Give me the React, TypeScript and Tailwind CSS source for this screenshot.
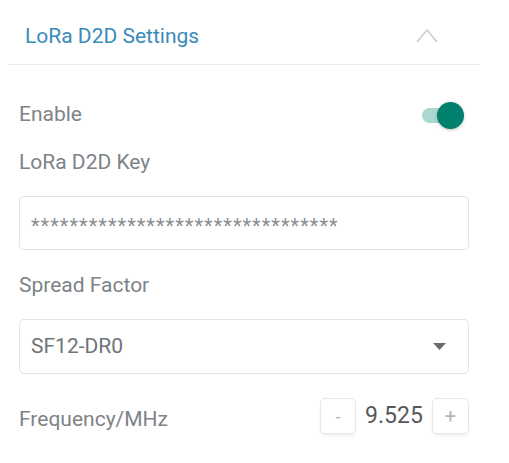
import React from "react";

export default function App() {
  const font = { fontFamily: "Roboto, 'Noto Sans', sans-serif" };
  return (
    <div className="w-[509px] h-[463px] bg-white overflow-hidden" style={font}>
      <div className="ml-[8px] w-[472px] h-[65px] border-b border-[#ececec] flex items-center justify-between pl-[17px] pr-[41px]">
        <span className="text-[21px] text-[#3a8abb] leading-none mt-[9px]">LoRa D2D Settings</span>
        <svg width="24" height="18" viewBox="0 0 24 18" className="mt-[6px]">
          <path d="M2 16 L12 4 L22 16" fill="none" stroke="#cfcfcf" strokeWidth="1.6" />
        </svg>
      </div>
      <div className="px-[19px] w-[488px]">
        <div className="h-[50px] mt-[25px] flex items-center justify-between">
          <span className="text-[21px] text-[#7d8387]">Enable</span>
          <div className="relative w-[44px] h-[28px] mr-[5px]">
            <div className="absolute left-[2px] top-[7px] w-[34px] h-[15px] rounded-full bg-[#a9d8d0]" />
            <div className="absolute right-[0px] top-[1px] w-[27px] h-[27px] rounded-full bg-[#00806d] shadow-[0_1px_3px_rgba(0,0,0,0.25)]" />
          </div>
        </div>
        <div className="mt-[3px] h-[40px] flex items-center">
          <span className="text-[21px] text-[#7d8387]">LoRa D2D Key</span>
        </div>
        <div className="mt-[13px] h-[54px] w-[450px] border border-[#e3e3e3] rounded-[5px] flex items-center pl-[11px]">
          <span className="text-[20px] text-[#8a8f93] tracking-[1px] mt-[5px]">********************************</span>
        </div>
        <div className="mt-[16px] h-[40px] flex items-center">
          <span className="text-[21px] text-[#7d8387]">Spread Factor</span>
        </div>
        <div className="mt-[13px] h-[55px] w-[450px] border border-[#e3e3e3] rounded-[5px] flex items-center justify-between pl-[11px] pr-[22px]">
          <span className="text-[21px] text-[#6f7478]">SF12-DR0</span>
          <svg width="13" height="7" viewBox="0 0 13 7">
            <path d="M0 0 L13 0 L6.5 7 Z" fill="#6b6b6b" />
          </svg>
        </div>
        <div className="mt-[24px] h-[36px] flex items-center justify-between">
          <span className="text-[21px] text-[#7d8387] mt-[8px]">Frequency/MHz</span>
          <div className="flex items-center">
            <div className="w-[36px] h-[36px] border border-[#e6e6e6] rounded-[5px] flex items-center justify-center text-[18px] text-[#b5b5b5] shadow-[0_2px_3px_rgba(0,0,0,0.05)]">-</div>
            <span className="w-[76px] text-center text-[23px] text-[#55595c]">9.525</span>
            <div className="w-[37px] h-[36px] border border-[#e6e6e6] rounded-[5px] flex items-center justify-center text-[20px] text-[#b5b5b5] shadow-[0_2px_3px_rgba(0,0,0,0.05)]">+</div>
          </div>
        </div>
      </div>
    </div>
  );
}
